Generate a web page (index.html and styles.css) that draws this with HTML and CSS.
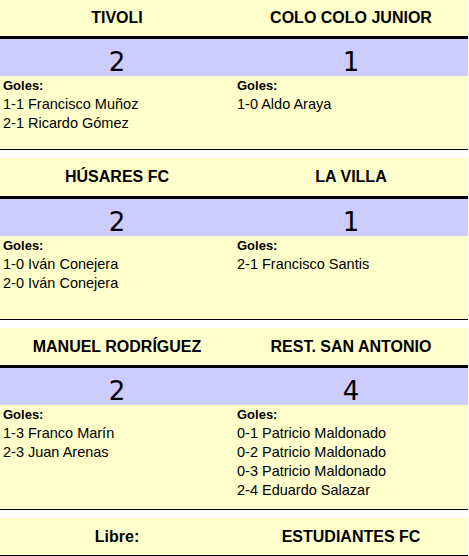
FILE: index.html
```html
<!DOCTYPE html>
<html lang="es">
<head>
<meta charset="utf-8">
<link rel="stylesheet" href="styles.css">
</head>
<body>
<div class="page">
  <section class="match m1">
    <div class="row head"><div class="cell">TIVOLI</div><div class="cell">COLO COLO JUNIOR</div></div>
    <div class="row score"><div class="cell">2</div><div class="cell">1</div></div>
    <div class="row goals g1">
      <div class="cell"><div class="lbl">Goles:</div><div>1-1 Francisco Muñoz</div><div>2-1 Ricardo Gómez</div></div>
      <div class="cell"><div class="lbl">Goles:</div><div>1-0 Aldo Araya</div></div>
    </div>
  </section>
  <section class="match m2">
    <div class="row head"><div class="cell">HÚSARES FC</div><div class="cell">LA VILLA</div></div>
    <div class="row score"><div class="cell">2</div><div class="cell">1</div></div>
    <div class="row goals g2">
      <div class="cell"><div class="lbl">Goles:</div><div>1-0 Iván Conejera</div><div>2-0 Iván Conejera</div></div>
      <div class="cell"><div class="lbl">Goles:</div><div>2-1 Francisco Santis</div></div>
    </div>
  </section>
  <section class="match m3">
    <div class="row head"><div class="cell">MANUEL RODRÍGUEZ</div><div class="cell">REST. SAN ANTONIO</div></div>
    <div class="row score"><div class="cell">2</div><div class="cell">4</div></div>
    <div class="row goals g3">
      <div class="cell"><div class="lbl">Goles:</div><div>1-3 Franco Marín</div><div>2-3 Juan Arenas</div></div>
      <div class="cell"><div class="lbl">Goles:</div><div>0-1 Patricio Maldonado</div><div>0-2 Patricio Maldonado</div><div>0-3 Patricio Maldonado</div><div>2-4 Eduardo Salazar</div></div>
    </div>
  </section>
  <section class="match free">
    <div class="row head last"><div class="cell">Libre:</div><div class="cell">ESTUDIANTES FC</div></div>
  </section>
</div>
</body>
</html>
```
FILE: styles.css
```css
html, body {
  margin: 0;
  padding: 0;
  background: #ffffff;
}
.page {
  width: 468px;
  display: flex;
  flex-direction: column;
  gap: 8px;
  font-family: "Liberation Sans", Arial, sans-serif;
  color: #000;
}
.match {
  display: flex;
  flex-direction: column;
  background: #ffffcc;
  border-bottom: 1px solid #000;
}
.match.free {
  border-bottom: none;
}
.row {
  display: grid;
  grid-template-columns: 234px 234px;
}
.head {
  height: 38px;
  border-bottom: 3px solid #000;
  font-weight: bold;
  font-size: 16px;
  line-height: 38px;
  text-align: center;
}
.m1 .head {
  height: 36px;
  line-height: 36px;
}
.m3 .head {
  height: 37px;
  line-height: 37px;
}
.free .head {
  height: 37px;
  line-height: 37px;
}
.score {
  background: #ccccff;
  height: 37px;
  box-sizing: border-box;
  padding-top: 5px;
  line-height: 37px;
  font-family: "DejaVu Sans", Verdana, sans-serif;
  font-size: 26px;
  text-align: center;
  overflow: hidden;
}
.goals {
  font-size: 14.5px;
  line-height: 19px;
}
.goals .cell {
  padding-left: 3px;
}
.g1 { height: 73px; }
.g2 { height: 83px; }
.g3 { height: 104px; }
.lbl {
  font-weight: bold;
  font-size: 13px;
}
```
